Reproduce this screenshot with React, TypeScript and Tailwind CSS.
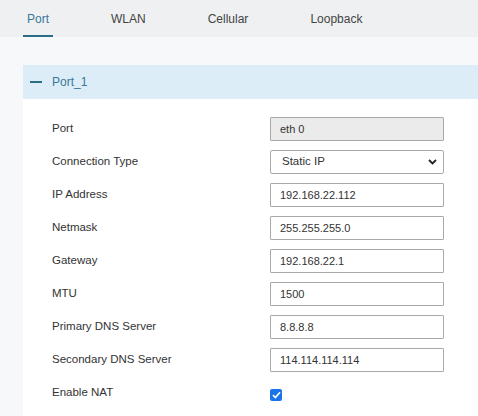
import React from "react";

const rows: { label: string; value: string; kind: "ro" | "select" | "text" }[] = [
  { label: "Port", value: "eth 0", kind: "ro" },
  { label: "Connection Type", value: "Static IP", kind: "select" },
  { label: "IP Address", value: "192.168.22.112", kind: "text" },
  { label: "Netmask", value: "255.255.255.0", kind: "text" },
  { label: "Gateway", value: "192.168.22.1", kind: "text" },
  { label: "MTU", value: "1500", kind: "text" },
  { label: "Primary DNS Server", value: "8.8.8.8", kind: "text" },
  { label: "Secondary DNS Server", value: "114.114.114.114", kind: "text" },
];

export default function App() {
  return (
    <div
      className="w-[478px] h-[416px] overflow-hidden bg-[#f6f8f9] text-[#333]"
      style={{ fontFamily: '"Liberation Sans", Arial, sans-serif' }}
    >
      <div className="h-[37px] bg-[#eef0f1] flex items-stretch pl-[23px] gap-[54px] text-[12px]">
        <div className="px-[4px] flex items-center border-b-2 border-[#2b6c86] text-[#3a7898] pt-[2px]">Port</div>
        <div className="px-[4px] flex items-center text-[#444] pt-[2px] border-b-2 border-transparent">WLAN</div>
        <div className="px-[4px] flex items-center text-[#444] pt-[2px] border-b-2 border-transparent">Cellular</div>
        <div className="px-[4px] flex items-center text-[#444] pt-[2px] border-b-2 border-transparent">Loopback</div>
      </div>
      <div className="pl-[23px] pt-[28px]">
        <div className="bg-white h-[360px]">
          <div className="h-[34px] bg-[#dcedf7] flex items-center pl-[7px] gap-[10px]">
            <div className="w-[12px] h-[2px] bg-[#2b6c86]" />
            <span className="text-[12px] text-[#3a7898]">Port_1</span>
          </div>
          <div className="pt-[18px] pl-[29px] flex flex-col gap-[9px]">
            {rows.map((r) => (
              <div key={r.label} className="flex items-center h-[24px]">
                <div className="w-[218px] text-[11.5px] text-[#333]">{r.label}</div>
                {r.kind === "select" ? (
                  <div className="w-[174px] h-[24px] border border-[#a9a9a9] rounded-[2px] bg-white flex items-center justify-between pl-[11px] pr-[6px] text-[11.5px]">
                    <span>{r.value}</span>
                    <svg width="9" height="6" viewBox="0 0 9 6">
                      <path d="M1 1 L4.5 4.5 L8 1" fill="none" stroke="#222" strokeWidth="1.8" />
                    </svg>
                  </div>
                ) : (
                  <div
                    className={`w-[174px] h-[24px] border border-[#a9a9a9] rounded-[1px] flex items-center pl-[9px] text-[11px] ${
                      r.kind === "ro" ? "bg-[#ebebeb]" : "bg-white"
                    }`}
                  >
                    {r.value}
                  </div>
                )}
              </div>
            ))}
            <div className="flex items-center h-[24px]">
              <div className="w-[218px] text-[11.5px] text-[#333]">Enable NAT</div>
              <div className="w-[12px] h-[12px] rounded-[2px] bg-[#1a73e8] flex items-center justify-center mt-[4px]">
                <svg width="9" height="8" viewBox="0 0 9 8">
                  <path d="M1 4.2 L3.4 6.5 L8 1.3" fill="none" stroke="white" strokeWidth="1.7" />
                </svg>
              </div>
            </div>
          </div>
        </div>
      </div>
    </div>
  );
}
